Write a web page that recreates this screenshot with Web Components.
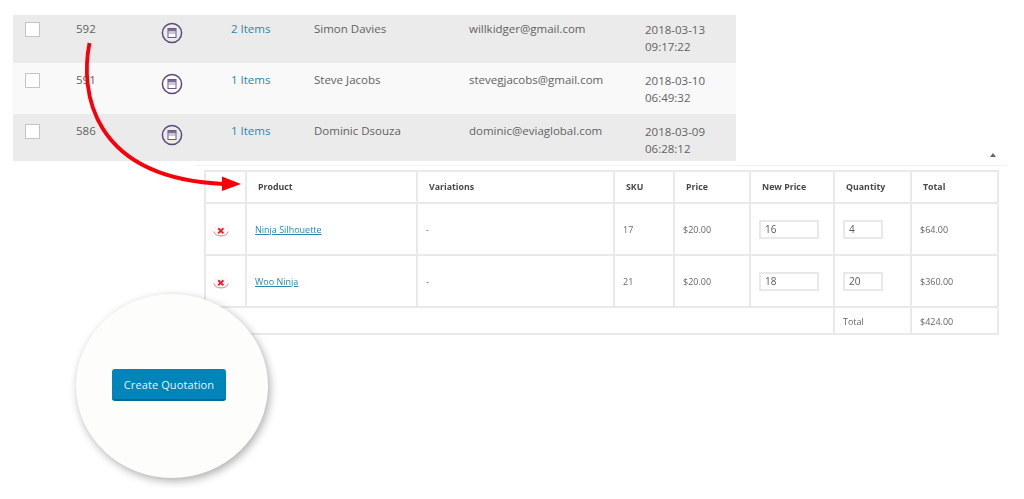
<!DOCTYPE html>
<html><head><meta charset="utf-8"><title>Create Quotation</title>
<style>
html,body{margin:0;padding:0;background:#fff}
body{font-family:"Open Sans","Liberation Sans",sans-serif;width:1024px;height:499px;overflow:hidden}
</style></head>
<body>
<quote-page>
  <order-table>
    <order-row shade="dark" oid="592" items="2 Items" name="Simon Davies" email="willkidger@gmail.com" date="2018-03-13" time="09:17:22"></order-row>
    <order-row shade="light" oid="591" items="1 Items" name="Steve Jacobs" email="stevegjacobs@gmail.com" date="2018-03-10" time="06:49:32" style="--h:51px;--pad:9px"></order-row>
    <order-row shade="dark" oid="586" items="1 Items" name="Dominic Dsouza" email="dominic@eviaglobal.com" date="2018-03-09" time="06:28:12" style="--h:47px;--pad:9px"></order-row>
  </order-table>
  <product-panel></product-panel>
  <quote-callout>Create Quotation</quote-callout>
  <curve-arrow></curve-arrow>
</quote-page>
<script>
class QuotePage extends HTMLElement{
  constructor(){super();this.attachShadow({mode:'open'}).innerHTML=`<style>
    :host{display:block;position:relative;width:1024px;height:499px;padding-top:15px;box-sizing:border-box;filter:blur(.35px)}
  </style><slot></slot>`;}
}
class OrderTable extends HTMLElement{
  constructor(){super();this.attachShadow({mode:'open'}).innerHTML=`<style>
    :host{display:flex;flex-direction:column;width:723px;margin-left:13px}
  </style><slot></slot>`;}
}
class OrderRow extends HTMLElement{
  connectedCallback(){
    const a=n=>this.getAttribute(n);
    const bg=a('shade')==='dark'?'#ebebeb':'#f9f9f9';
    this.attachShadow({mode:'open'}).innerHTML=`<style>
      :host{display:grid;height:var(--h,48px);box-sizing:border-box;background:${bg};
        grid-template-columns:63px 72px 83px 83px 155px 176px 1fr;
        font:11.5px/17px "Open Sans",sans-serif;color:#626262;padding-top:var(--pad,6px)}
      .chk{width:13px;height:13px;margin:1px 0 0 12px;background:#fff;border:1px solid #c4c4c4;box-sizing:content-box}
      .ic{width:22px;height:22px;margin:1px 0 0 13px;display:block}
      .t{margin-top:-1px}
      a{color:#2b87ad;text-decoration:none}
    </style>
    <div class="c"><div class="chk"></div></div>
    <div class="c t">${a('oid')}</div>
    <div class="c"><svg class="ic" viewBox="0 0 22 22" fill="none">
      <circle cx="11" cy="11" r="9.6" stroke="#5d4a7a" stroke-width="1.5"/>
      <rect x="7" y="6.5" width="8" height="9" fill="#fff" stroke="#6a5a84" stroke-width="1"/>
      <rect x="7" y="6.8" width="8" height="2.6" fill="#7a6c92"/>
      <path d="M7 11h8" stroke="#9a8fae" stroke-width="1"/>
    </svg></div>
    <div class="c t"><a href="#">${a('items')}</a></div>
    <div class="c t">${a('name')}</div>
    <div class="c t">${a('email')}</div>
    <div class="c">${a('date')}<br>${a('time')}</div>`;
  }
}
const REMOVE=`<svg width="16" height="13" viewBox="0 0 16 13" fill="none" style="display:block">
  <path d="M5.2 3.2l5.2 5.2M10.4 3.2L5.2 8.4" stroke="#ee1f2a" stroke-width="2"/>
  <path d="M.8 6.5C2 12.4 14 12.4 15.2 6.5" stroke="#f4757c" stroke-width="1"/>
  <path d="M4 1.6C2.8 2 2 2.7 1.6 3.5M12 1.6C13.2 2 14 2.7 14.4 3.5" stroke="#fbd4d6" stroke-width=".8"/>
</svg>`;
class ProductPanel extends HTMLElement{
  constructor(){super();
    const row=(name,sku,price,np,q,tot)=>`<tr class="item">
      <td class="x"><span>${REMOVE}</span></td><td class="p"><a href="#">${name}</a></td><td>-</td><td>${sku}</td><td>${price}</td>
      <td class="inp"><input value="${np}" style="width:60px"></td><td class="inp"><input value="${q}" style="width:40px"></td><td>${tot}</td></tr>`;
    this.attachShadow({mode:'open'}).innerHTML=`<style>
      :host{display:block;margin:4px 18px 0 196px;position:relative;border-top:1px solid #f1f1f1;padding:4px 0 0 8px;}
      .tri{position:absolute;right:10px;top:-13px;width:0;height:0;border:3px solid transparent;border-top:0;border-bottom:4px solid #666}
      table{border-collapse:collapse;table-layout:fixed;width:793px;font:9px/13px "Open Sans",sans-serif;color:#666;}
      th,td{border:2px solid #e9e9e9;padding:0 0 0 8px;text-align:left;box-sizing:border-box}
      th{height:32px;font-weight:700;font-size:8.8px;color:#484848;padding:0 0 0 11px}
      table{border:1px solid #e4e4e4}
      .item td{height:52px}
      .p{padding-left:8px}
      a{color:#2b87ad;text-decoration:underline}
      .x{padding:0 0 0 7px}
      .x span{display:block;margin-top:5px}
      .inp{padding:0 0 0 8px}
      input{display:block;height:19px;box-sizing:border-box;border:2px solid #e9e9e9;background:#fff;margin:0;padding:0 0 0 4px;font:10px "Open Sans",sans-serif;color:#5a5a5a;outline:0;border-radius:0}
      .foot td{height:27px;padding-top:2px}
      .blank{border-right:2px solid #e9e9e9}
    </style>
    <div class="tri"></div>
    <table>
      <colgroup><col style="width:41px"><col style="width:171px"><col style="width:197px"><col style="width:60px"><col style="width:76px"><col style="width:84px"><col style="width:77px"><col style="width:87px"></colgroup>
      <tr><th></th><th>Product</th><th>Variations</th><th>SKU</th><th>Price</th><th>New Price</th><th>Quantity</th><th>Total</th></tr>
      ${row('Ninja Silhouette','17','$20.00','16','4','$64.00')}
      ${row('Woo Ninja','21','$20.00','18','20','$360.00')}
      <tr class="foot"><td colspan="6" class="blank"></td><td>Total</td><td>$424.00</td></tr>
    </table>`;
  }
}
class QuoteCallout extends HTMLElement{
  constructor(){super();this.attachShadow({mode:'open'}).innerHTML=`<style>
    :host{position:absolute;left:76px;top:294px;width:192px;height:184px;border-radius:50%;background:#fdfdfb;
      box-shadow:2px 3px 8px rgba(0,0,0,.32);display:flex;align-items:center;justify-content:center}
    button{width:114px;height:32px;margin:0 6px 2px 0;padding:0;border:0;border-bottom:2px solid #006a99;border-radius:3px;background:#0085ba;color:#e6f3f8;
      font:11px "Open Sans",sans-serif;letter-spacing:.01em;cursor:pointer}
  </style><button><slot></slot></button>`;}
}
class CurveArrow extends HTMLElement{
  constructor(){super();this.attachShadow({mode:'open'}).innerHTML=`<style>
    :host{position:absolute;left:0;top:0;width:260px;height:200px;pointer-events:none}
    svg{display:block}
  </style><svg width="260" height="200" viewBox="0 0 260 200" fill="none">
    <path d="M89.5 43C80 90 90 178 224 184" stroke="#f7000a" stroke-width="3.8"/>
    <path d="M222 176.5L241 184L222 191Z" fill="#f7000a"/>
  </svg>`;}
}
customElements.define('quote-page',QuotePage);
customElements.define('order-table',OrderTable);
customElements.define('order-row',OrderRow);
customElements.define('product-panel',ProductPanel);
customElements.define('quote-callout',QuoteCallout);
customElements.define('curve-arrow',CurveArrow);
</script>
</body></html>
